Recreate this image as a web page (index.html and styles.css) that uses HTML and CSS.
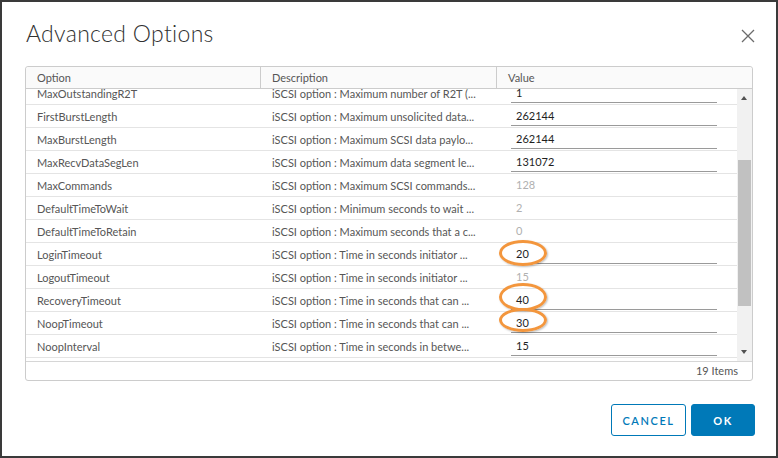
FILE: index.html
```html
<!DOCTYPE html>
<html>
<head>
<meta charset="utf-8">
<link rel="stylesheet" href="styles.css">
</head>
<body>
<div class="dialog">
  <div class="dhead">
    <h1 class="title">Advanced Options</h1>
    <svg class="close" width="14" height="14" viewBox="0 0 14 14"><path d="M1 1L13 13M13 1L1 13" stroke="#6b6b6b" stroke-width="1.3" fill="none"/></svg>
  </div>
  <div class="grid">
    <div class="ghead">
      <div class="hc">Option</div>
      <div class="hc">Description</div>
      <div class="hc last">Value</div>
    </div>
    <div class="gbody">
      <div class="rows">
        <div class="rowlist">
          <div class="row"><div class="c1">MaxOutstandingR2T</div><div class="c2">iSCSI option : Maximum number of R2T (...</div><div class="c3"><span class="inp">1</span></div></div>
          <div class="row"><div class="c1">FirstBurstLength</div><div class="c2">iSCSI option : Maximum unsolicited data...</div><div class="c3"><span class="inp">262144</span></div></div>
          <div class="row"><div class="c1">MaxBurstLength</div><div class="c2">iSCSI option : Maximum SCSI data paylo...</div><div class="c3"><span class="inp">262144</span></div></div>
          <div class="row"><div class="c1">MaxRecvDataSegLen</div><div class="c2">iSCSI option : Maximum data segment le...</div><div class="c3"><span class="inp">131072</span></div></div>
          <div class="row"><div class="c1">MaxCommands</div><div class="c2">iSCSI option : Maximum SCSI commands...</div><div class="c3"><span class="ro">128</span></div></div>
          <div class="row"><div class="c1">DefaultTimeToWait</div><div class="c2">iSCSI option : Minimum seconds to wait ...</div><div class="c3"><span class="ro">2</span></div></div>
          <div class="row"><div class="c1">DefaultTimeToRetain</div><div class="c2">iSCSI option : Maximum seconds that a c...</div><div class="c3"><span class="ro">0</span></div></div>
          <div class="row"><div class="c1">LoginTimeout</div><div class="c2">iSCSI option : Time in seconds initiator ...</div><div class="c3"><span class="inp">20</span><span class="mark m1"></span></div></div>
          <div class="row"><div class="c1">LogoutTimeout</div><div class="c2">iSCSI option : Time in seconds initiator ...</div><div class="c3"><span class="ro">15</span></div></div>
          <div class="row"><div class="c1">RecoveryTimeout</div><div class="c2">iSCSI option : Time in seconds that can ...</div><div class="c3"><span class="inp">40</span><span class="mark m2"></span></div></div>
          <div class="row"><div class="c1">NoopTimeout</div><div class="c2">iSCSI option : Time in seconds that can ...</div><div class="c3"><span class="inp">30</span><span class="mark m3"></span></div></div>
          <div class="row"><div class="c1">NoopInterval</div><div class="c2">iSCSI option : Time in seconds in betwe...</div><div class="c3"><span class="inp">15</span></div></div>
        </div>
      </div>
      <div class="sbar">
        <div class="arrow up"></div>
        <div class="track"><div class="thumb"></div></div>
        <div class="arrow down"></div>
      </div>
    </div>
    <div class="gfoot">19 Items</div>
  </div>
  <div class="actions">
    <button class="btn cancel">CANCEL</button>
    <button class="btn ok">OK</button>
  </div>
</div>
</body>
</html>
```
FILE: styles.css
```css
html, body {
  margin: 0;
  padding: 0;
  background: #3a3a3a;
}
body {
  width: 778px;
  height: 458px;
  padding: 2px;
  box-sizing: border-box;
  font-family: Lato, "Open Sans", sans-serif;
}
.dialog {
  width: 774px;
  height: 454px;
  background: #fff;
  box-sizing: border-box;
  padding: 0 21px 0 23px;
  display: flex;
  flex-direction: column;
}
.dhead {
  display: flex;
  justify-content: space-between;
  align-items: center;
  height: 64px;
  padding-left: 1px;
}
.title {
  margin: 0;
  font-weight: 300;
  font-size: 23px;
  color: #313131;
  letter-spacing: 0.3px;
  padding-bottom: 2px;
}
.close {
  margin-right: 0px;
  margin-top: 3px;
}
.grid {
  width: 728px;
  height: 315px;
  border: 1px solid #cccccc;
  border-radius: 3px;
  box-sizing: border-box;
  display: flex;
  flex-direction: column;
  font-size: 11px;
  color: #565656;
}
.ghead {
  display: flex;
  height: 22px;
  flex: none;
  background: #fafafa;
  border-bottom: 1px solid #cccccc;
  box-sizing: border-box;
  border-radius: 3px 3px 0 0;
}
.hc {
  width: 236px;
  box-sizing: border-box;
  border-right: 1px solid #cccccc;
  padding-left: 11px;
  line-height: 21px;
  color: #565656;
}
.hc:first-child { width: 235px; }
.hc.last { border-right: none; flex: 1; padding-left: 11px; }
.gbody {
  display: flex;
  height: 272px;
  flex: none;
  border-bottom: 1px solid #d6d6d6;
}
.rows {
  flex: 1;
  overflow: hidden;
}
.rowlist {
  margin-top: -7px;
}
.row {
  display: flex;
  height: 23px;
  box-sizing: border-box;
  border-bottom: 1px solid #e4e4e4;
  align-items: center;
}
.c1 { width: 235px; padding-left: 11px; box-sizing: border-box; }
.c2 { width: 236px; padding-left: 11px; box-sizing: border-box; white-space: nowrap; }
.c3 {
  flex: 1;
  position: relative;
  height: 100%;
  padding-left: 14px;
  box-sizing: border-box;
}
.inp {
  display: block;
  width: 206px;
  height: 21px;
  box-sizing: border-box;
  border-bottom: 1px solid #9a9a9a;
  padding-left: 5px;
  line-height: 21px;
  color: #1e1e1e;
}
.ro {
  display: block;
  padding-left: 5px;
  line-height: 22px;
  color: #b0b0b0;
}
.mark {
  position: absolute;
  border: 3px solid #f3963d;
  border-radius: 50%;
  box-sizing: border-box;
  box-shadow: 1px 1px 2px rgba(0,0,0,0.25);
}
.m1 { left: 2px; top: -3px; width: 48px; height: 26px; }
.m2 { left: 2px; top: -6px; width: 48px; height: 28px; }
.m3 { left: 2px; top: -4px; width: 48px; height: 24px; }
.sbar {
  width: 15px;
  flex: none;
  display: flex;
  flex-direction: column;
  background: #f1f1f1;
}
.arrow {
  height: 17px;
  flex: none;
  position: relative;
}
.arrow::after {
  content: "";
  position: absolute;
  left: 4px;
  width: 0;
  height: 0;
  border-left: 3.5px solid transparent;
  border-right: 3.5px solid transparent;
}
.arrow.up::after { top: 7px; border-bottom: 4px solid #505050; }
.arrow.down::after { top: 6px; border-top: 4px solid #505050; }
.track {
  flex: 1;
  padding: 54px 1px 0 1px;
}
.thumb {
  height: 146px;
  background: #c1c1c1;
}
.gfoot {
  flex: 1;
  text-align: right;
  padding-right: 14px;
  line-height: 18px;
  color: #565656;
}
.actions {
  display: flex;
  justify-content: flex-end;
  gap: 5px;
  margin-top: 23px;
}
.btn {
  height: 32px;
  box-sizing: border-box;
  border-radius: 3px;
  font-family: Lato, sans-serif;
  font-size: 11px;
  font-weight: 700;
  letter-spacing: 1.6px;
  padding: 0;
  cursor: pointer;
}
.cancel {
  width: 75px;
  background: #fff;
  border: 1px solid #0079b8;
  color: #0079b8;
  font-weight: 600;
}
.ok {
  width: 64px;
  background: #0079b8;
  border: 1px solid #0079b8;
  color: #fff;
}
```
